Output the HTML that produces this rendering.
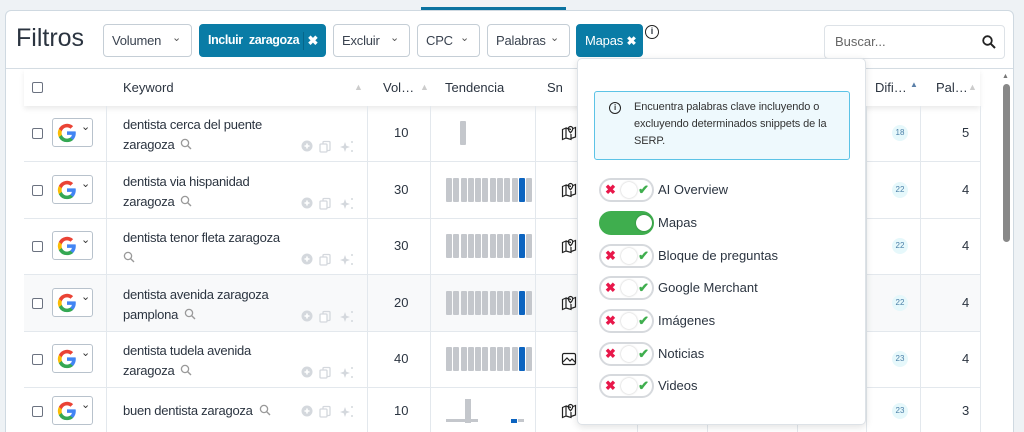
<!DOCTYPE html>
<html style="height:432px;overflow:hidden"><head><meta charset="utf-8">
<style>
*{box-sizing:border-box;margin:0;padding:0}
body{width:1024px;height:432px;overflow:hidden;background:#eef2f5;font-family:"Liberation Sans",sans-serif;color:#2b3440;position:relative}
.a{position:absolute}
.card{left:5px;top:10px;width:1009px;height:430px;background:#fff;border:1px solid #cfd9e1;border-radius:6px}
.tab{left:421px;top:7px;width:145px;height:3px;background:#0b73a0}
.btn{position:absolute;top:24px;height:33px;border:1px solid #c5ced6;border-radius:4px;background:#fff;font-size:13px;color:#3a4350;line-height:31px;padding-left:8px;letter-spacing:-0.2px}
.btn .cv{position:absolute;right:10px;top:-2px;font-size:11px;color:#555}
.btn.on{background:#0a7ca6;border-color:#0a7ca6;color:#fff}
.th{top:69px;height:37px;background:#fff;box-shadow:0 3px 5px rgba(0,0,0,.08);font-size:13px;line-height:37px;color:#2b3440}
.vl{position:absolute;width:1px;background:#e3e8ed}
.hl{position:absolute;height:1px;background:#e3e8ed;left:24px;width:956px}
.cb{position:absolute;width:11px;height:11px;border:1px solid #6b7280;border-radius:2px;background:#fff}
.g{position:absolute;left:52px;width:41px;height:29px;border:1px solid #b8c2cc;border-radius:3px;background:#fff}
.kw{position:absolute;left:123px;font-size:13px;line-height:20px;color:#2b3440;letter-spacing:-0.25px}
.num{position:absolute;font-size:13px}
.bars{position:absolute;left:446px;height:24px;display:flex;gap:1.3px}
.bars i{display:block;width:6px;height:24px;background:#c4c7cc;border-radius:1px}
.bars i.b{background:#0c64c0}
.badge{position:absolute;left:892px;width:16px;height:16px;border-radius:8px;background:#e6f8fb;font-size:8px;color:#4a7fa8;text-align:center;line-height:16px}
.panel{left:577px;top:58px;width:289px;height:367px;background:#fff;border:1px solid #dde2e7;border-radius:5px;box-shadow:0 2px 8px rgba(0,0,0,.12)}
.info{left:16px;top:32px;width:256px;height:69px;background:#eef9fd;border:1px solid #5cc3e6;border-radius:3px;font-size:11px;line-height:17px;color:#333;padding:7px 8px 0 39px;letter-spacing:-0.1px}
.tg{position:absolute;left:21px;width:55px;height:24px;border:2px solid #d6d9dd;border-radius:12px;background:#fff}
.tg .x{position:absolute;left:4px;top:0px;color:#e8174a;font-size:13px;font-weight:bold;line-height:20px}
.tg .k{position:absolute;left:20px;top:2px;width:16px;height:16px;border-radius:8px;background:#fff;box-shadow:0 0 2px rgba(0,0,0,.25)}
.tg .c{position:absolute;right:3px;top:0;color:#3fae4e;font-size:13px;font-weight:bold;line-height:20px}
.tl{position:absolute;left:80px;font-size:13px;color:#2b3440}
</style></head><body>
<div class="a card"></div>
<div class="a tab"></div>
<div class="a" style="left:16px;top:24px;font-size:25px;color:#2b3440">Filtros</div>
<div class="btn" style="left:103px;width:89px">Volumen<span class="cv">&#8964;</span></div>
<div class="btn on" style="left:199px;width:127px;font-weight:bold;font-size:12.5px;letter-spacing:-0.4px">Incluir&nbsp; zaragoza<span style="position:absolute;left:103px;top:7px;width:1px;height:18px;background:#06668a"></span><span style="position:absolute;right:7px;font-size:13px">&#10006;</span></div>
<div class="btn" style="left:333px;width:77px">Excluir<span class="cv">&#8964;</span></div>
<div class="btn" style="left:417px;width:63px">CPC<span class="cv">&#8964;</span></div>
<div class="btn" style="left:487px;width:83px">Palabras<span class="cv">&#8964;</span></div>
<div class="btn on" style="left:576px;width:67px">Mapas <span style="font-size:12px;font-weight:bold">&#10006;</span></div>
<div class="a" style="left:645px;top:25px;width:14px;height:14px;border:1.5px solid #222;border-radius:7px;font-size:9px;text-align:center;line-height:11px;font-weight:bold">i</div>
<div class="a" style="left:824px;top:25px;width:181px;height:34px;border:1px solid #dde2e7;border-radius:4px;font-size:13px;color:#666;line-height:32px;padding-left:10px">Buscar...
<svg style="position:absolute;right:8px;top:9px" width="14" height="14" viewBox="0 0 14 14"><circle cx="5.5" cy="5.5" r="4.3" fill="none" stroke="#222" stroke-width="1.8"/><path d="M8.7 8.7L13 13" stroke="#222" stroke-width="2"/></svg></div>
<div class="a" style="left:6px;top:68px;width:1007px;height:1px;background:#d5dde4"></div>
<div class="a th" style="left:24px;width:956px">
<div class="cb" style="left:8px;top:13px"></div>
<span class="a" style="left:99px">Keyword</span><span class="a" style="left:330px;color:#ccc;font-size:9px">&#9650;</span>
<span class="a" style="left:359px">Vol…</span><span class="a" style="left:396px;color:#ccc;font-size:9px">&#9650;</span>
<span class="a" style="left:421px">Tendencia</span>
<span class="a" style="left:523px">Sn</span>
<span class="a" style="left:851px">Difi…</span><span class="a" style="left:886px;top:-3px;color:#5a7fa8;font-size:8px">&#9650;</span>
<span class="a" style="left:912px">Pal…</span><span class="a" style="left:944px;color:#ccc;font-size:9px">&#9650;</span>
</div>
<div class="a" style="left:1003px;top:84px;width:7px;height:158px;background:#888;border-radius:4px"></div>
<div class="a" style="left:1002px;top:73px;font-size:7px;color:#777">&#9650;</div>
<div id="rows"></div>
<div class="a panel">
<div class="a info"><span style="position:absolute;left:14px;top:10px;width:12px;height:12px;border:1.5px solid #222;border-radius:6px;font-size:8px;text-align:center;line-height:9px;font-weight:bold">i</span>Encuentra palabras clave incluyendo o excluyendo determinados snippets de la SERP.</div>
<div id="tgs"></div>
</div>
<script>
var rows=[
[105,"dentista cerca del puente","zaragoza","10",0,"18","5",0],
[162,"dentista via hispanidad","zaragoza","30",1,"22","4",0],
[218,"dentista tenor fleta zaragoza","","30",1,"22","4",0],
[275,"dentista avenida zaragoza","pamplona","20",1,"22","4",1],
[331,"dentista tudela avenida","zaragoza","40",1,"23","4",0],
[388,"buen dentista zaragoza",null,"10",2,"23","3",0]];
var h='';
var G='<svg width="22" height="22" viewBox="0 0 24 24" style="position:absolute;left:3px;top:3px"><path d="M21.6 12.2c0-.7-.1-1.4-.2-2H12v3.9h5.4a4.6 4.6 0 0 1-2 3v2.5h3.2c1.9-1.8 3-4.4 3-7.4z" fill="#4285F4"/><path d="M12 22c2.7 0 5-.9 6.6-2.4l-3.2-2.5c-.9.6-2 1-3.4 1-2.6 0-4.8-1.8-5.6-4.1H3.1v2.6A10 10 0 0 0 12 22z" fill="#34A853"/><path d="M6.4 14a6 6 0 0 1 0-3.9V7.5H3.1a10 10 0 0 0 0 9z" fill="#FBBC05"/><path d="M12 5.9c1.5 0 2.8.5 3.8 1.5l2.9-2.9A10 10 0 0 0 3.1 7.5l3.3 2.6C7.2 7.7 9.4 5.9 12 5.9z" fill="#EA4335"/></svg><span style="position:absolute;left:28px;top:1px;font-size:11px;color:#333">&#8964;</span>';
var MAP='<svg width="16" height="16" viewBox="0 0 16 16"><path d="M1.5 4.5L5 3v10l-3.5 1.5zM5 3l5 1.5M10 13.5l4.5-1.5V2.5L12 3.5M5 13l5 1.5V9" fill="none" stroke="#222" stroke-width="1.2"/><path d="M9.5 1.5a2.2 2.2 0 0 1 2.2 2.2c0 1.6-2.2 4-2.2 4s-2.2-2.4-2.2-4a2.2 2.2 0 0 1 2.2-2.2z" fill="none" stroke="#222" stroke-width="1.2"/></svg>';
var IMG='<svg width="16" height="16" viewBox="0 0 16 16"><rect x="1.5" y="2.5" width="13" height="11" rx="1.5" fill="none" stroke="#222" stroke-width="1.2"/><path d="M2 11l4-4 3 3 2-2 3.5 3.5" fill="none" stroke="#222" stroke-width="1.2"/></svg>';
var ICS='<svg width="60" height="14" viewBox="0 0 60 14"><circle cx="6" cy="7" r="5.5" fill="#d4d8dd"/><path d="M3.5 7h5M6 4.5v5" stroke="#fff" stroke-width="1.6"/><rect x="22" y="2.5" width="7" height="9" rx="1" fill="none" stroke="#d4d8dd" stroke-width="1.3"/><rect x="19" y="5" width="7" height="8" rx="1" fill="#fff" stroke="#d4d8dd" stroke-width="1.3"/><path d="M44 3l1.3 3.7L49 8l-3.7 1.3L44 13l-1.3-3.7L39 8l3.7-1.3z" fill="#d4d8dd"/><circle cx="51" cy="3" r="1" fill="#d4d8dd"/><circle cx="51" cy="12" r="1" fill="#d4d8dd"/></svg>';
rows.forEach(function(r){
 var y=r[0],H=(r[0]==388?44:56);
 if(r[7])h+='<div class="a" style="left:24px;top:'+y+'px;width:956px;height:'+H+'px;background:#f8f9fa"></div>';
 h+='<div class="hl" style="top:'+(y+H)+'px"></div>';
 var c=y+H/2; if(y==388)c=411;
 h+='<div class="cb" style="left:32px;top:'+(c-5)+'px"></div>';
 h+='<div class="g" style="top:'+(c-15)+'px">'+G+'</div>';
 var q='<svg width="12" height="12" viewBox="0 0 12 12" style="margin-left:6px;vertical-align:-1px"><circle cx="5" cy="5" r="3.6" fill="none" stroke="#999" stroke-width="1.3"/><path d="M7.6 7.6L11 11" stroke="#999" stroke-width="1.4"/></svg>';
 if(r[2]===null)h+='<div class="kw" style="top:'+(c-10)+'px">'+r[1]+q+'</div>';
 else if(r[2]==="")h+='<div class="kw" style="top:'+(y+10)+'px">'+r[1]+'<br>'+q.replace('margin-left:6px','margin-left:0')+'</div>';
 else h+='<div class="kw" style="top:'+(y+10)+'px">'+r[1]+'<br>'+r[2]+q+'</div>';
 h+='<div class="a" style="left:301px;top:'+(c+(y==388?-7:6))+'px">'+ICS+'</div>';
 h+='<div class="num" style="left:394px;top:'+(c-8)+'px">'+r[3]+'</div>';
 if(r[4]==0)h+='<div class="bars" style="left:460px;top:'+(c-12)+'px"><i></i></div>';
 else if(r[4]==1){var b='';for(var i=0;i<12;i++)b+='<i'+(i==10?' class="b"':'')+'></i>';h+='<div class="bars" style="top:'+(c-12)+'px">'+b+'</div>';}
 else {h+='<div class="a" style="left:446px;top:'+(c+8)+'px;width:32px;height:3px;background:#c4c7cc"></div><div class="a" style="left:465px;top:'+(c-12)+'px;width:6px;height:24px;background:#c4c7cc"></div><div class="a" style="left:511px;top:'+(c+8)+'px;width:6px;height:4px;background:#0c64c0"></div><div class="a" style="left:518px;top:'+(c+8)+'px;width:6px;height:3px;background:#c4c7cc"></div>';}
 h+='<div class="a" style="left:561px;top:'+(c-8)+'px">'+(y==331?IMG:MAP)+'</div>';
 h+='<div class="badge" style="top:'+(c-8)+'px">'+r[5]+'</div>';
 h+='<div class="num" style="left:962px;top:'+(c-8)+'px">'+r[6]+'</div>';
});
[106,367,430,535,637,707,797,866,920,980].forEach(function(x){h+='<div class="vl" style="left:'+x+'px;top:106px;height:330px"></div>';});
document.getElementById('rows').innerHTML=h;
var t=[["AI Overview",120],["Mapas",153],["Bloque de preguntas",186],["Google Merchant",218],["Imágenes",251],["Noticias",284],["Videos",316]],s='';
t.forEach(function(a,i){
 if(i==1)s+='<div class="tg" style="top:'+(a[1]-1)+'px;background:#3fae4e;border-color:#3fae4e"><div class="k" style="left:35px;top:2px"></div></div>';
 else s+='<div class="tg" style="top:'+(a[1]-1)+'px"><span class="x">&#10006;</span><div class="k"></div><span class="c">&#10004;</span></div>';
 s+='<div class="tl" style="top:'+(a[1]+3)+'px">'+a[0]+'</div>';
});
document.getElementById('tgs').innerHTML=s;
</script>
</body></html>
